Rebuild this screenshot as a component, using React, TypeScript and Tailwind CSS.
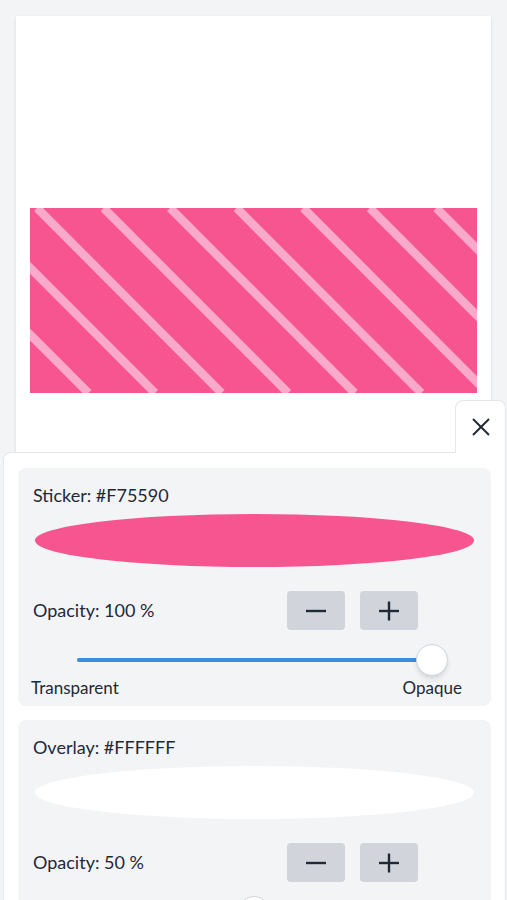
import React from "react";

type Layer = {
  label: string;
  hex: string;
  opacity: number;
};

const layers: Layer[] = [
  { label: "Sticker", hex: "#F75590", opacity: 100 },
  { label: "Overlay", hex: "#FFFFFF", opacity: 50 },
];

function Stripes() {
  // diagonal light stripes over the sticker colour
  const lines = [];
  for (let k = -4; k < 8; k++) {
    const x = 7 + k * 66.7;
    lines.push(
      <line key={k} x1={x} y1={0} x2={x + 185} y2={185} stroke="#f9a9c9" strokeWidth={8.5} />
    );
  }
  return (
    <svg viewBox="0 0 448 185" className="block h-full w-full" preserveAspectRatio="none">
      <rect width="448" height="185" fill="#F75590" />
      {lines}
    </svg>
  );
}

function MinusIcon() {
  return (
    <svg width="22" height="22" viewBox="0 0 22 22">
      <line x1="1" y1="11" x2="21" y2="11" stroke="#1f2937" strokeWidth="2.4" />
    </svg>
  );
}

function PlusIcon() {
  return (
    <svg width="22" height="22" viewBox="0 0 22 22">
      <line x1="1" y1="11" x2="21" y2="11" stroke="#1f2937" strokeWidth="2.4" />
      <line x1="11" y1="1.5" x2="11" y2="20.5" stroke="#1f2937" strokeWidth="2.4" />
    </svg>
  );
}

function LayerCard({ layer }: { layer: Layer }) {
  return (
    <div className="rounded-lg bg-[#f3f4f6] px-[15px] pt-[14px] pb-[6px]">
      <p className="text-[18px] leading-[26px]">
        {layer.label}: {layer.hex}
      </p>
      <div
        className="mx-[2px] mt-[6px] h-[53px] rounded-[50%]"
        style={{ backgroundColor: layer.hex }}
      />
      <div className="mt-[24px] flex h-[39px] items-center">
        <span className="w-[254px] text-[18px]">Opacity: {layer.opacity} %</span>
        <div className="flex gap-[15px]">
          <button className="flex h-[39px] w-[58px] items-center justify-center rounded-[4px] bg-[#d1d5db]">
            <MinusIcon />
          </button>
          <button className="flex h-[39px] w-[58px] items-center justify-center rounded-[4px] bg-[#d1d5db]">
            <PlusIcon />
          </button>
        </div>
      </div>
      <div className="mt-[14px] h-[32px]">
        <div className="relative mx-auto h-full w-[80%]">
          <div className="absolute top-1/2 left-0 h-1 w-full -translate-y-1/2 rounded-full bg-[#cbd5e1]" />
          <div
            className="absolute top-1/2 left-0 h-1 -translate-y-1/2 rounded-full bg-[#3a8ddb]"
            style={{ width: `${layer.opacity}%` }}
          />
          <div
            className="absolute top-0 h-8 w-8 -translate-x-1/2 rounded-full border border-[#d1d5db] bg-white shadow-md"
            style={{ left: `${layer.opacity}%` }}
          />
        </div>
      </div>
      <div className="-ml-[2px] flex justify-between pr-[14px] text-[17px] leading-[24px]">
        <span>Transparent</span>
        <span>Opaque</span>
      </div>
    </div>
  );
}

export default function App() {
  return (
    <div className="h-[900px] w-full overflow-hidden bg-[#f3f4f6] font-['Lato',sans-serif] text-[#1f2937]">
      <div className="mx-4 mt-4 h-[436px] bg-white px-[14px] pt-[192px] shadow-sm">
        <div className="h-[185px]">
          <Stripes />
        </div>
      </div>

      <div className="relative mr-px ml-[3px] flex flex-col gap-[14px] rounded-tl-lg border border-[#e5e7eb] bg-white px-[14px] pt-[15px]">
        <button className="absolute -top-[53px] -right-px flex h-[53px] w-[51px] items-center justify-center rounded-t-lg border border-b-0 border-[#e5e7eb] bg-white">
          <svg width="20" height="20" viewBox="0 0 20 20">
            <line x1="2" y1="2" x2="18" y2="18" stroke="#1f2937" strokeWidth="2" />
            <line x1="18" y1="2" x2="2" y2="18" stroke="#1f2937" strokeWidth="2" />
          </svg>
        </button>
        {layers.map((layer) => (
          <LayerCard key={layer.label} layer={layer} />
        ))}
      </div>
    </div>
  );
}
